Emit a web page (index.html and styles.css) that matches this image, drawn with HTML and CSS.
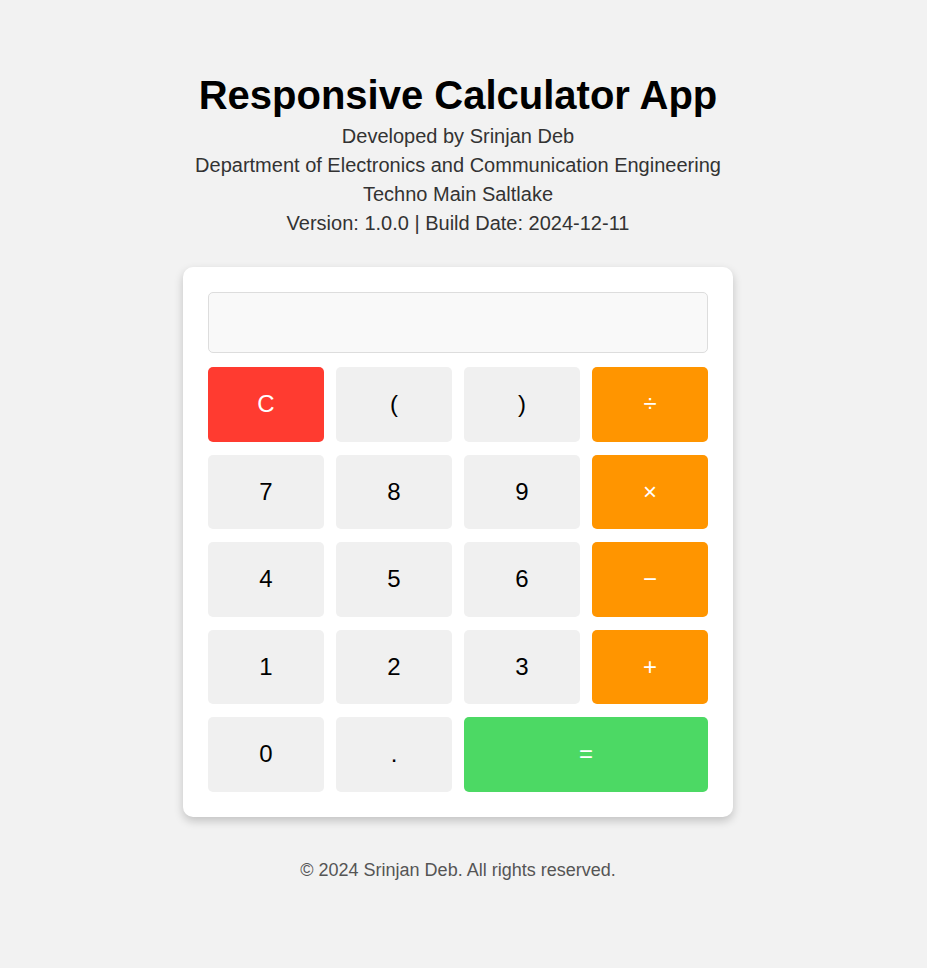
FILE: index.html
```html
<!DOCTYPE html>
<html lang="en">
<head>
<meta charset="UTF-8">
<title>Responsive Calculator App</title>
<link rel="stylesheet" href="styles.css">
</head>
<body>
<div class="page">
  <header class="header">
    <h1 class="title">Responsive Calculator App</h1>
    <p class="info">Developed by Srinjan Deb</p>
    <p class="info">Department of Electronics and Communication Engineering</p>
    <p class="info">Techno Main Saltlake</p>
    <p class="info">Version: 1.0.0 | Build Date: 2024-12-11</p>
  </header>
  <main class="calc">
    <div class="display"></div>
    <div class="keys">
      <button class="key clear">C</button>
      <button class="key">(</button>
      <button class="key">)</button>
      <button class="key op">÷</button>
      <button class="key">7</button>
      <button class="key">8</button>
      <button class="key">9</button>
      <button class="key op">×</button>
      <button class="key">4</button>
      <button class="key">5</button>
      <button class="key">6</button>
      <button class="key op">−</button>
      <button class="key">1</button>
      <button class="key">2</button>
      <button class="key">3</button>
      <button class="key op">+</button>
      <button class="key">0</button>
      <button class="key">.</button>
      <button class="key equals">=</button>
    </div>
  </main>
  <footer class="footer">© 2024 Srinjan Deb. All rights reserved.</footer>
</div>
</body>
</html>
```

FILE: styles.css
```css
* { box-sizing: border-box; }
html, body { margin: 0; padding: 0; }
body {
  background: #f2f2f2;
  font-family: "Liberation Sans", Arial, sans-serif;
  color: #333;
}
.page {
  width: 916px;
  display: flex;
  flex-direction: column;
  align-items: center;
  padding-top: 72px;
}
.header { text-align: center; }
.title {
  margin: 0 0 4px;
  font-size: 40px;
  line-height: 46px;
  font-weight: bold;
  color: #000;
}
.info {
  margin: 0;
  font-size: 20px;
  line-height: 29px;
  color: #333;
}
.calc {
  margin-top: 29px;
  width: 550px;
  background: #fff;
  border-radius: 10px;
  padding: 25px;
  box-shadow: 0 4px 10px rgba(0, 0, 0, 0.2);
}
.display {
  height: 61px;
  background: #f9f9f9;
  border: 1px solid #ddd;
  border-radius: 5px;
  margin-bottom: 14px;
}
.keys {
  display: grid;
  grid-template-columns: repeat(4, 1fr);
  column-gap: 12px;
  row-gap: 13px;
}
.key {
  height: 74.5px;
  border: none;
  border-radius: 5px;
  background: #f0f0f0;
  color: #000;
  font-family: "Liberation Sans", Arial, sans-serif;
  font-size: 24px;
  padding: 0;
}
.clear { background: #ff3b30; color: #fff; }
.op { background: #ff9500; color: #fff; }
.equals { background: #4cd964; color: #fff; grid-column: span 2; }
.footer {
  margin-top: 43px;
  font-size: 18px;
  line-height: 20px;
  color: #555;
}
```
